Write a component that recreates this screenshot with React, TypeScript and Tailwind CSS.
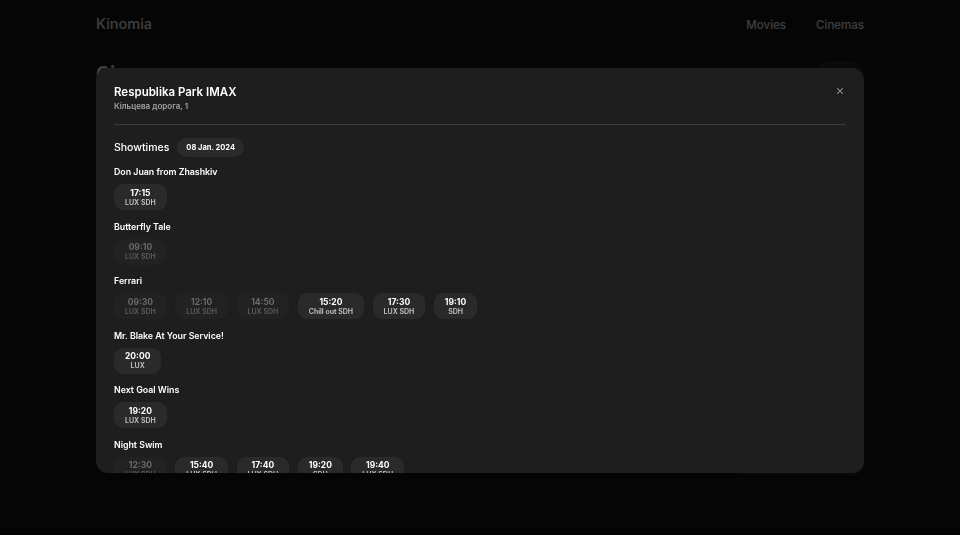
import { X } from "lucide-react";

type Slot = { time: string; format: string; past?: boolean };
type Movie = { title: string; slots: Slot[] };

const movies: Movie[] = [
  { title: "Don Juan from Zhashkiv", slots: [{ time: "17:15", format: "LUX SDH" }] },
  { title: "Butterfly Tale", slots: [{ time: "09:10", format: "LUX SDH", past: true }] },
  {
    title: "Ferrari",
    slots: [
      { time: "09:30", format: "LUX SDH", past: true },
      { time: "12:10", format: "LUX SDH", past: true },
      { time: "14:50", format: "LUX SDH", past: true },
      { time: "15:20", format: "Chill out SDH" },
      { time: "17:30", format: "LUX SDH" },
      { time: "19:10", format: "SDH" },
    ],
  },
  { title: "Mr. Blake At Your Service!", slots: [{ time: "20:00", format: "LUX" }] },
  { title: "Next Goal Wins", slots: [{ time: "19:20", format: "LUX SDH" }] },
  {
    title: "Night Swim",
    slots: [
      { time: "12:30", format: "LUX SDH", past: true },
      { time: "15:40", format: "LUX SDH" },
      { time: "17:40", format: "LUX SDH" },
      { time: "19:20", format: "SDH" },
      { time: "19:40", format: "LUX SDH" },
    ],
  },
];

function SlotChip({ slot }: { slot: Slot }) {
  return (
    <button
      className={
        slot.past
          ? "flex flex-col items-center justify-center h-[26px] px-[11px] rounded-[9px] bg-[#222222] text-[#6b6b6b]"
          : "flex flex-col items-center justify-center h-[26px] px-[11px] rounded-[9px] bg-[#2a2a2a] text-white"
      }
    >
      <span className="text-[8.5px] font-bold leading-[10px]">{slot.time}</span>
      <span
        className={
          slot.past
            ? "text-[7px] font-semibold leading-[9px] text-[#5c5c5c]"
            : "text-[7px] font-semibold leading-[9px] text-[#c4c4c4]"
        }
      >
        {slot.format}
      </span>
    </button>
  );
}

export default function App() {
  return (
    <div className="relative h-[535px] bg-[#171717] text-[#f5f5f5] font-['Inter',sans-serif] overflow-hidden">
      {/* page behind the dialog */}
      <header className="mx-auto w-[768px] h-12 flex items-center justify-between">
        <span className="text-[14.5px] font-medium">Kinomia</span>
        <nav className="flex gap-[30px] mt-[3px] text-[11.5px] font-medium">
          <a href="">Movies</a>
          <a href="">Cinemas</a>
        </nav>
      </header>
      <main className="mx-auto w-[768px] mt-[12px]">
        <div className="flex items-center justify-between">
          <h1 className="text-[19px] font-bold">Cinemas</h1>
          <div className="h-[26px] w-[48px] rounded-full bg-[#2a2a2a]" />
        </div>
        <div className="flex justify-end mt-4">
          <div className="w-[129px] h-[370px] rounded-xl bg-[#2a2a2a]" />
        </div>
      </main>

      {/* overlay + dialog */}
      <div className="fixed inset-0 bg-black/75 flex justify-center items-start pt-[68px]">
        <div className="w-[768px] h-[405px] rounded-[12px] bg-[#1e1e1e] px-[18px] pt-[16px] overflow-hidden">
          <div className="flex items-start justify-between">
            <div>
              <h2 className="text-[11.5px] font-semibold leading-[16px] text-white">Respublika Park IMAX</h2>
              <p className="text-[8px] font-semibold leading-[12px] text-[#a3a3a3]">Кільцева дорога, 1</p>
            </div>
            <button className="mt-[2px] mr-[1px] text-[#9a9a9a]">
              <X size={10} strokeWidth={2.5} />
            </button>
          </div>
          <div className="mt-[12px] h-px bg-[#3d3d3d]" />
          <div className="mt-[13px] flex items-center gap-[8px]">
            <span className="text-[10.5px] font-medium text-white">Showtimes</span>
            <span className="h-[19px] px-[9px] rounded-full bg-[#2a2a2a] flex items-center text-[7.5px] font-bold text-white">
              08 Jan. 2024
            </span>
          </div>
          <div className="mt-[9px] flex flex-col gap-[10.5px]">
            {movies.map((m) => (
              <section key={m.title}>
                <h3 className="text-[8.8px] font-semibold leading-[12px] text-white">{m.title}</h3>
                <div className="mt-[6px] flex gap-[8.5px]">
                  {m.slots.map((s, i) => (
                    <SlotChip key={i} slot={s} />
                  ))}
                </div>
              </section>
            ))}
          </div>
        </div>
      </div>
    </div>
  );
}
